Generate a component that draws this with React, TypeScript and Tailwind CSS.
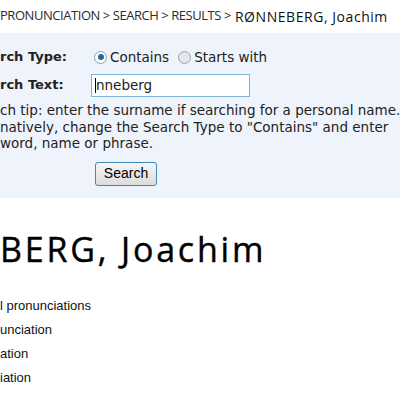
const links = ["l pronunciations", "unciation", "ation", "iation"];

export default function App() {
  return (
    <div className="w-[400px] h-[400px] overflow-hidden bg-white">
      {/* breadcrumb */}
      <div className="h-[33px] flex items-center whitespace-nowrap pb-[1px]">
        <span className="font-['Open_Sans',sans-serif] text-[13px] text-[#2b2b2b] tracking-[-0.45px]">
          PRONUNCIATION &gt; SEARCH &gt; RESULTS &gt;
        </span>
        <span className="ml-[4px] font-['Open_Sans',sans-serif] text-[14px] tracking-[0.55px] text-[#111]">
          RØNNEBERG, Joachim
        </span>
      </div>

      {/* search panel */}
      <div className="bg-[#eef3fc] h-[165px] pt-[12px] font-['DejaVu_Sans',sans-serif] text-[#222] whitespace-nowrap">
        <div className="flex items-center h-[24px]">
          <div className="w-[91px] font-bold text-[13px]">rch Type:</div>
          <label className="ml-[3px] flex items-center gap-[3px] text-[13.5px]">
            <span className="w-[13px] h-[13px] rounded-full border border-[#8aa0b4] bg-white flex items-center justify-center">
              <span className="w-[6px] h-[6px] rounded-full bg-[#1c6aa8]" />
            </span>
            Contains
          </label>
          <label className="ml-[9px] flex items-center gap-[3px] text-[13.5px]">
            <span className="w-[13px] h-[13px] rounded-full border border-[#9aa5ae] bg-[#e6e6e6]" />
            Starts with
          </label>
        </div>
        <div className="flex items-center h-[26px] mt-[3px]">
          <div className="w-[91px] font-bold text-[13px]">rch Text:</div>
          <div className="w-[159px] h-[23px] border border-[#7eb4d4] bg-white flex items-center pl-[3px] text-[13.5px]">
            <span className="w-[1px] h-[15px] bg-black" />
            nneberg
          </div>
        </div>
        <p className="mt-[4px] leading-[16.5px] text-[13.5px]">
          ch tip: enter the surname if searching for a personal name.
          <br />
          natively, change the Search Type to "Contains" and enter
          <br />
          word, name or phrase.
        </p>
        <button className="ml-[95px] mt-[10px] w-[62px] h-[24px] rounded-[3px] border border-[#3c8ab8] bg-gradient-to-b from-[#f6f6f6] to-[#dcdcdc] font-['Liberation_Sans',sans-serif] text-[14px] text-black">
          Search
        </button>
      </div>

      {/* heading */}
      <h1 className="mt-[32px] font-['Open_Sans',sans-serif] text-[34px] leading-[38px] text-black whitespace-nowrap tracking-[2.8px] [-webkit-text-stroke:0.4px_black]">
        BERG, Joachim
      </h1>

      {/* links */}
      <ul className="mt-[28px] flex flex-col gap-[6px] font-['Liberation_Sans',sans-serif] text-[13px] text-[#111] whitespace-nowrap">
        {links.map((t) => (
          <li key={t} className="h-[18px]">
            {t}
          </li>
        ))}
      </ul>
    </div>
  );
}
